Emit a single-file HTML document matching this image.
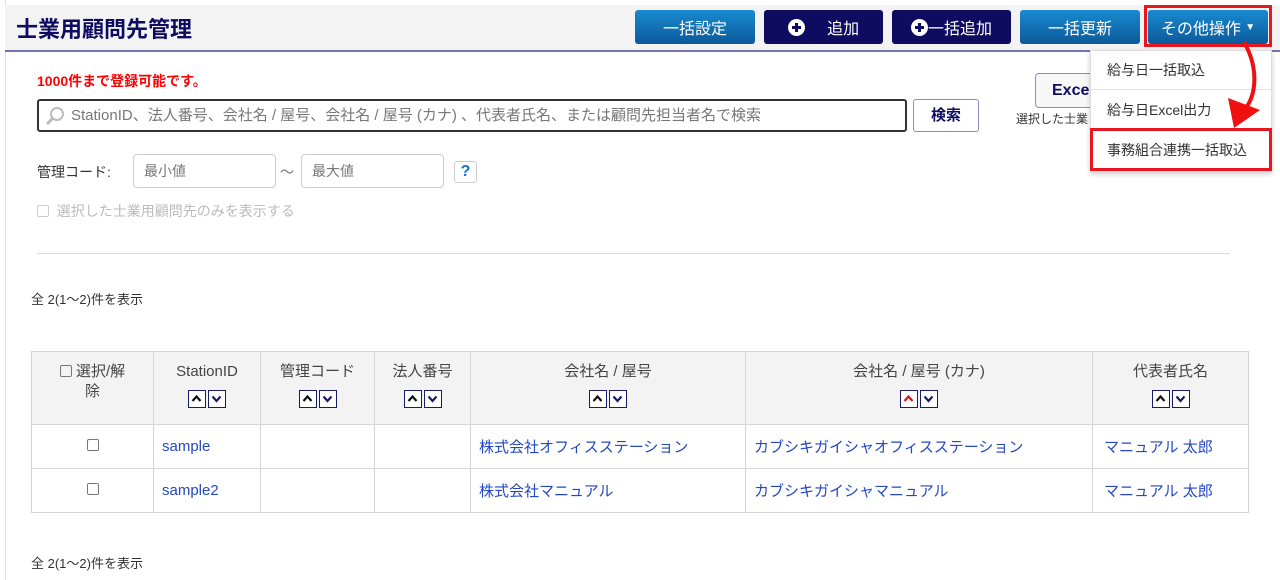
<!DOCTYPE html>
<html><head><meta charset="utf-8"><style>
*{box-sizing:border-box;margin:0;padding:0}
body{width:1280px;height:580px;position:relative;overflow:hidden;background:#fff;font-family:"Liberation Sans","Noto Sans CJK JP",sans-serif;color:#333;font-size:14px}
.a{position:absolute}
.hdr{left:5px;top:5px;width:1275px;height:47px;background:#f3f3f3;border-bottom:2px solid #7272b0}
.btn{position:absolute;top:10px;height:34px;border-radius:3px;color:#fff;font-size:16px;display:flex;align-items:center;justify-content:center}
.b1{background:linear-gradient(#1a8ad0,#0b5a9a)}
.b2{background:#0e0b60}
.plus{display:inline-block;width:17px;height:17px;border-radius:50%;background:#fff;position:relative}
.plus:before{content:"";position:absolute;left:4px;top:7px;width:9px;height:3px;background:#0e0b60}
.plus:after{content:"";position:absolute;left:7px;top:4px;width:3px;height:9px;background:#0e0b60}
.inp{border:1px solid #ccc;border-radius:4px;height:34px;color:#777;padding-left:10px;line-height:32px;font-size:14px}
table{border-collapse:collapse;position:absolute;left:31px;top:351px;width:1218px}
td,th{border:1px solid #d5d5d5;font-size:15px}
th{background:#f3f3f3;font-weight:normal;height:73px;vertical-align:top;padding-top:10px;color:#444;line-height:20px}
td{height:44px;color:#2447c2;padding-left:8px}
.s{display:inline-block;width:18px;height:18px;border:1.5px solid #1a1a6a;margin:8px 1px 0;background:#fff;vertical-align:top}
.s svg{display:block}
.cb{display:inline-block;width:12px;height:12px;border:1px solid #777;border-radius:2px}
.dd{left:1090px;top:50px;width:182px;height:122px;background:#fff;border:1px solid #ddd;box-shadow:0 2px 5px rgba(0,0,0,.2)}
.di{position:absolute;left:16px;font-size:14px;color:#333}
</style></head><body>
<div class="a" style="left:5px;top:0;width:1px;height:580px;background:#ddd"></div>
<div class="a hdr"></div>
<div class="a" style="left:16px;top:12px;font-size:22px;font-weight:bold;color:#0e0b60">士業用顧問先管理</div>
<div class="btn b1" style="left:635px;width:120px">一括設定</div>
<div class="btn b2" style="left:764px;width:119px"><span class="plus"></span>&nbsp;&nbsp;&nbsp;&nbsp;&nbsp;追加</div>
<div class="btn b2" style="left:892px;width:119px"><span class="plus"></span>一括追加</div>
<div class="btn b1" style="left:1020px;width:120px">一括更新</div>
<div class="btn b1" style="left:1148px;width:120px">その他操作&nbsp;<span style="font-size:10px">▼</span></div>
<div class="a" style="left:1144px;top:5px;width:128px;height:42px;border:3px solid #e8161e"></div>
<div class="a" style="left:37px;top:71px;color:#f00;font-weight:bold;font-size:14px">1000件まで登録可能です。</div>
<div class="a" style="left:37px;top:99px;width:870px;height:33px;border:2px solid #333;border-radius:3px;color:#777;font-size:15px;line-height:29px;padding-left:32px">StationID、法人番号、会社名 / 屋号、会社名 / 屋号 (カナ) 、代表者氏名、または顧問先担当者名で検索</div>
<svg class="a" style="left:45px;top:106px" width="20" height="20"><circle cx="12" cy="8" r="6" fill="none" stroke="#bbb" stroke-width="2"/><line x1="8" y1="12" x2="2" y2="18" stroke="#bbb" stroke-width="3"/></svg>
<div class="a" style="left:913px;top:99px;width:66px;height:33px;border:1px solid #8a8ac8;border-radius:3px;text-align:center;line-height:31px;font-weight:bold;color:#0e0b60;font-size:15px">検索</div>
<div class="a" style="left:1035px;top:73px;width:80px;height:35px;border:1px solid #8a8ac8;border-radius:4px;background:#f7f7f7;font-weight:bold;color:#0e0b60;font-size:16px;line-height:33px;padding-left:16px">Excel</div>
<div class="a" style="left:1016px;top:110px;font-size:12px">選択した士業</div>
<div class="a" style="left:37px;top:162px">管理コード:</div>
<div class="a inp" style="left:133px;top:154px;width:143px">最小値</div>
<div class="a" style="left:280px;top:162px;color:#777">～</div>
<div class="a inp" style="left:301px;top:154px;width:143px">最大値</div>
<div class="a" style="left:454px;top:161px;width:23px;height:22px;border:1px solid #ccc;border-radius:3px;text-align:center;color:#1a6fd0;font-weight:bold;line-height:20px;font-size:16px">?</div>
<div class="a" style="left:37px;top:201px;color:#bbb;font-size:14px"><span class="cb" style="border-color:#ccc;vertical-align:-1px"></span>&nbsp; 選択した士業用顧問先のみを表示する</div>
<div class="a" style="left:37px;top:253px;width:1193px;height:1px;background:#ddd"></div>
<div class="a" style="left:31px;top:289px;font-size:13px">全 2(1～2)件を表示</div>
<table>
<tr><th style="width:122px"><span class="cb" style="vertical-align:-1px"></span> 選択/解<br>除</th>
<th style="width:107px">StationID<br><span class="s"><svg width="15" height="15"><path d="M3.5 10L7.5 5.5 11.5 10" fill="none" stroke="#111" stroke-width="2.2"/></svg></span><span class="s"><svg width="15" height="15"><path d="M3.5 5.5L7.5 10 11.5 5.5" fill="none" stroke="#1a1a6a" stroke-width="2.2"/></svg></span></th>
<th style="width:114px">管理コード<br><span class="s"><svg width="15" height="15"><path d="M3.5 10L7.5 5.5 11.5 10" fill="none" stroke="#111" stroke-width="2.2"/></svg></span><span class="s"><svg width="15" height="15"><path d="M3.5 5.5L7.5 10 11.5 5.5" fill="none" stroke="#1a1a6a" stroke-width="2.2"/></svg></span></th>
<th style="width:96px">法人番号<br><span class="s"><svg width="15" height="15"><path d="M3.5 10L7.5 5.5 11.5 10" fill="none" stroke="#111" stroke-width="2.2"/></svg></span><span class="s"><svg width="15" height="15"><path d="M3.5 5.5L7.5 10 11.5 5.5" fill="none" stroke="#1a1a6a" stroke-width="2.2"/></svg></span></th>
<th style="width:275px">会社名 / 屋号<br><span class="s"><svg width="15" height="15"><path d="M3.5 10L7.5 5.5 11.5 10" fill="none" stroke="#111" stroke-width="2.2"/></svg></span><span class="s"><svg width="15" height="15"><path d="M3.5 5.5L7.5 10 11.5 5.5" fill="none" stroke="#1a1a6a" stroke-width="2.2"/></svg></span></th>
<th style="width:347px">会社名 / 屋号 (カナ)<br><span class="s"><svg width="15" height="15"><path d="M3.5 10L7.5 5.5 11.5 10" fill="none" stroke="#e01010" stroke-width="2.2"/></svg></span><span class="s"><svg width="15" height="15"><path d="M3.5 5.5L7.5 10 11.5 5.5" fill="none" stroke="#1a1a6a" stroke-width="2.2"/></svg></span></th>
<th>代表者氏名<br><span class="s"><svg width="15" height="15"><path d="M3.5 10L7.5 5.5 11.5 10" fill="none" stroke="#111" stroke-width="2.2"/></svg></span><span class="s"><svg width="15" height="15"><path d="M3.5 5.5L7.5 10 11.5 5.5" fill="none" stroke="#1a1a6a" stroke-width="2.2"/></svg></span></th></tr>
<tr><td style="text-align:center;padding:0"><span class="cb"></span></td><td>sample</td><td></td><td></td><td>株式会社オフィスステーション</td><td>カブシキガイシャオフィスステーション</td><td style="padding-left:11px">マニュアル 太郎</td></tr>
<tr><td style="text-align:center;padding:0"><span class="cb"></span></td><td>sample2</td><td></td><td></td><td>株式会社マニュアル</td><td>カブシキガイシャマニュアル</td><td style="padding-left:11px">マニュアル 太郎</td></tr>
</table>
<div class="a" style="left:31px;top:553px;font-size:13px">全 2(1～2)件を表示</div>
<div class="a dd">
<div class="di" style="top:9px">給与日一括取込</div>
<div class="a" style="left:0;top:38px;width:180px;height:1px;background:#e5e5e5"></div>
<div class="di" style="top:49px">給与日Excel出力</div>
<div class="di" style="top:89px">事務組合連携一括取込</div>
</div>
<div class="a" style="left:1090px;top:128px;width:182px;height:43px;border:3px solid #e8161e"></div>
<svg class="a" style="left:1220px;top:40px" width="60" height="95"><path d="M24 2 C40 30 36 60 22 72" fill="none" stroke="#f01010" stroke-width="4"/><polygon points="8,58 40,70 14,88" fill="#f01010"/></svg>
</body></html>
